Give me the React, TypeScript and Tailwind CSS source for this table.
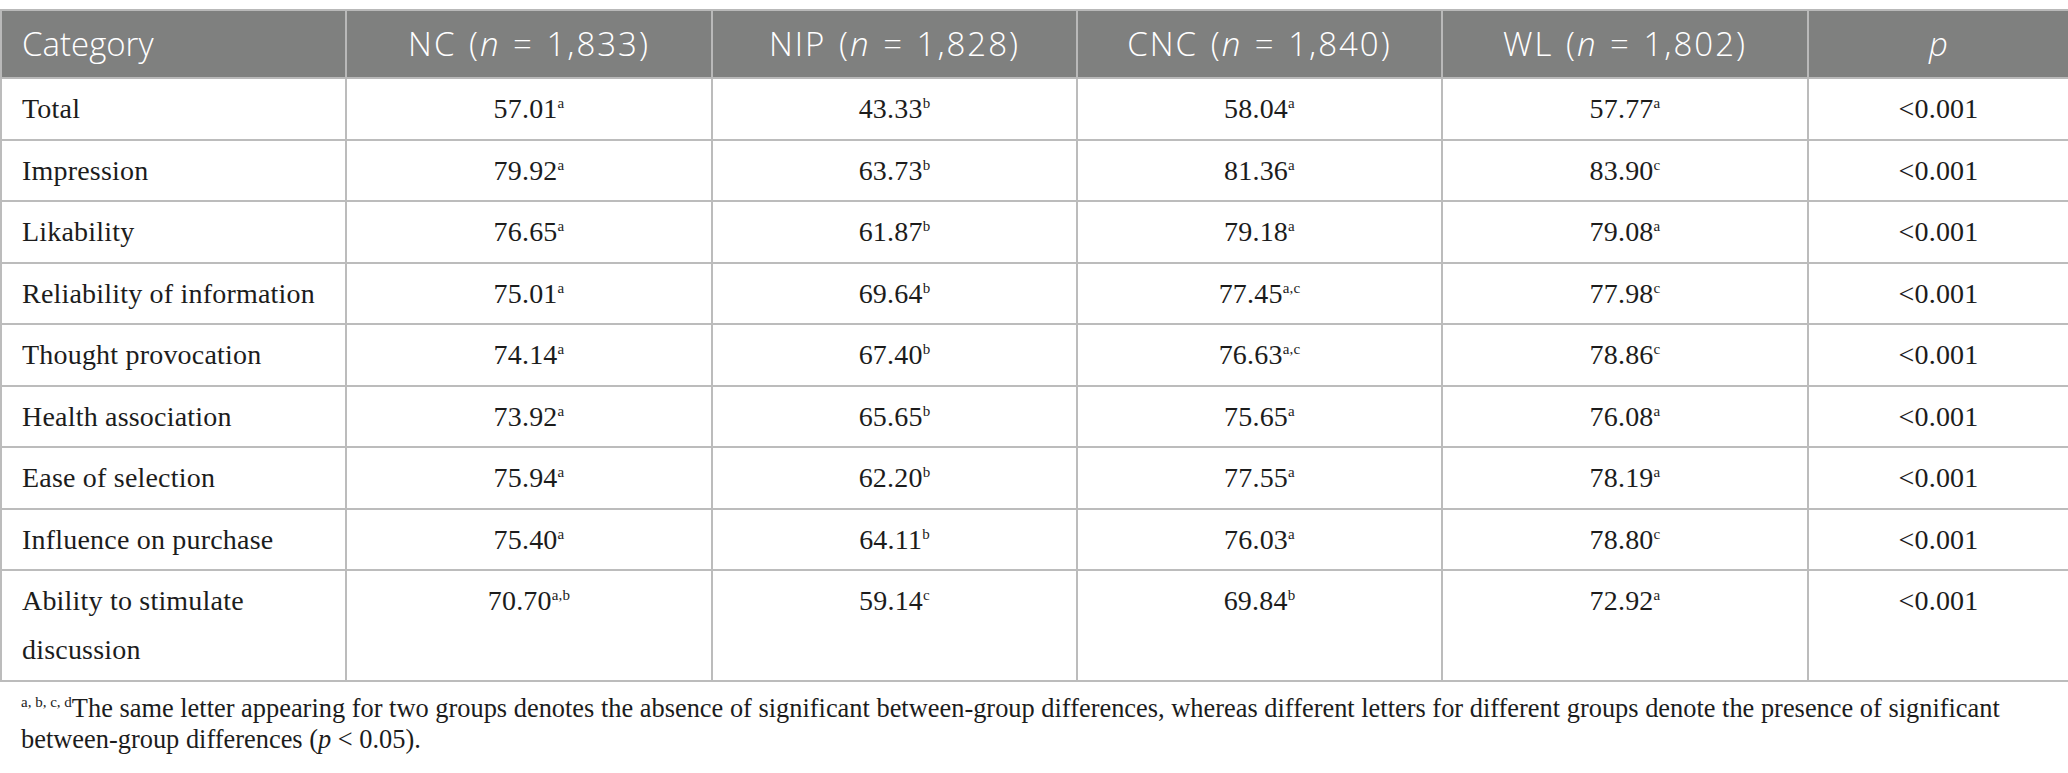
type Row = {
    label: string[];
    values: [string, string][];
    p: string;
};

const rows: Row[] = [
    { label: ["Total"], values: [["57.01", "a"], ["43.33", "b"], ["58.04", "a"], ["57.77", "a"]], p: "<0.001" },
    { label: ["Impression"], values: [["79.92", "a"], ["63.73", "b"], ["81.36", "a"], ["83.90", "c"]], p: "<0.001" },
    { label: ["Likability"], values: [["76.65", "a"], ["61.87", "b"], ["79.18", "a"], ["79.08", "a"]], p: "<0.001" },
    { label: ["Reliability of information"], values: [["75.01", "a"], ["69.64", "b"], ["77.45", "a,c"], ["77.98", "c"]], p: "<0.001" },
    { label: ["Thought provocation"], values: [["74.14", "a"], ["67.40", "b"], ["76.63", "a,c"], ["78.86", "c"]], p: "<0.001" },
    { label: ["Health association"], values: [["73.92", "a"], ["65.65", "b"], ["75.65", "a"], ["76.08", "a"]], p: "<0.001" },
    { label: ["Ease of selection"], values: [["75.94", "a"], ["62.20", "b"], ["77.55", "a"], ["78.19", "a"]], p: "<0.001" },
    { label: ["Influence on purchase"], values: [["75.40", "a"], ["64.11", "b"], ["76.03", "a"], ["78.80", "c"]], p: "<0.001" },
    { label: ["Ability to stimulate", "discussion"], values: [["70.70", "a,b"], ["59.14", "c"], ["69.84", "b"], ["72.92", "a"]], p: "<0.001" }
];

const groups = [
    { name: "NC", n: "1,833" },
    { name: "NIP", n: "1,828" },
    { name: "CNC", n: "1,840" },
    { name: "WL", n: "1,802" }
];

export default function App() {
    return (
        <div className="w-[2068px] bg-white pt-[9px]">
            {/* results table */}
            <table className="w-[2068px] table-fixed border-collapse">
                <colgroup>
                    <col className="w-[345px]" />
                    <col className="w-[366px]" />
                    <col className="w-[365px]" />
                    <col className="w-[365px]" />
                    <col className="w-[366px]" />
                    <col className="w-[261px]" />
                </colgroup>
                <thead>
                    <tr className="h-[68px] bg-[#7f807f] text-white font-['Open_Sans',sans-serif] text-[33px] font-light">
                        <th className="border-2 border-[#b9b9b9] text-left pl-[20px] font-light">Category</th>
                        {groups.map((g) => (
                            <th key={g.name} className="border-2 border-[#b9b9b9] text-center font-light tracking-[2px] [word-spacing:2px]">
                                {g.name} (<i>n</i> = {g.n})
                            </th>
                        ))}
                        <th className="border-2 border-[#b9b9b9] text-center font-light">
                            <i>p</i>
                        </th>
                    </tr>
                </thead>
                <tbody className="font-['Liberation_Serif',serif] text-[28px] tracking-[0.2px] text-[#1c1c1c] leading-[49px]">
                    {rows.map((r) => (
                        <tr key={r.label.join(" ")}>
                            <td className="border-2 border-[#bcbcbc] align-top pl-[20px] pt-[5px] pb-[5.5px]">
                                {r.label.map((l) => (
                                    <div key={l}>{l}</div>
                                ))}
                            </td>
                            {r.values.map(([v, s], i) => (
                                <td key={i} className="border-2 border-[#bcbcbc] align-top text-center pt-[5px] pb-[5.5px]">
                                    {v}
                                    <sup className="text-[15px] -top-[10px]">{s}</sup>
                                </td>
                            ))}
                            <td className="border-2 border-[#bcbcbc] align-top text-center pt-[5px] pb-[5.5px]">{r.p}</td>
                        </tr>
                    ))}
                </tbody>
            </table>

            {/* footnote */}
            <div className="pl-[21px] pt-[11px] font-['Liberation_Serif',serif] text-[26.4px] text-[#1c1c1c] leading-[31px]">
                <div className="whitespace-nowrap">
                    <sup className="text-[15px] -top-[10px]">a, b, c, d</sup>
                    The same letter appearing for two groups denotes the absence of significant between-group differences, whereas different letters for different groups denote the presence of significant
                </div>
                <div className="whitespace-nowrap">
                    between-group differences (<i>p</i> &lt; 0.05).
                </div>
            </div>
        </div>
    );
}
